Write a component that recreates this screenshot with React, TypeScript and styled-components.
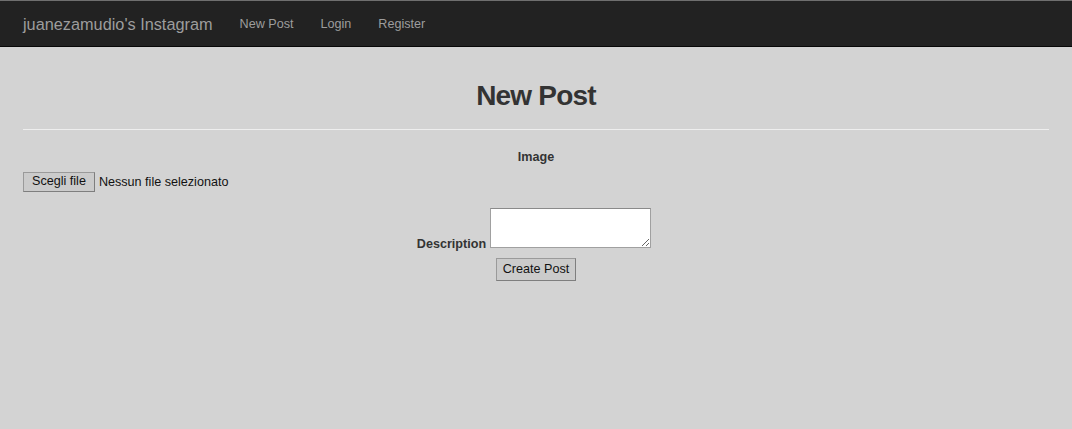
import React from "react";
import styled, { createGlobalStyle } from "styled-components";

const GlobalStyle = createGlobalStyle`
  html, body {
    margin: 0;
    padding: 0;
    background: #d3d3d3;
  }
  body {
    font-family: "Liberation Sans", Arial, Helvetica, sans-serif;
    color: #333;
    font-size: 12.6px;
  }
  * { box-sizing: border-box; }
`;

const Navbar = styled.nav`
  height: 47px;
  background: #222;
  border-top: 1px solid #6f6f6f;
  border-bottom: 1px solid #080808;
  display: flex;
  align-items: center;
  padding: 0 23px;
  gap: 27px;
`;

const Brand = styled.a`
  color: #9d9d9d;
  font-size: 16.3px;
  text-decoration: none;
  line-height: 20px;
`;

const NavLink = styled.a`
  color: #9d9d9d;
  font-size: 12.6px;
  text-decoration: none;
  line-height: 20px;
`;

const Main = styled.main`
  padding: 0 23px;
`;

const Title = styled.h1`
  margin: 33px 0 0;
  font-size: 28px;
  line-height: 32px;
  font-weight: bold;
  text-align: center;
  color: #333;
  letter-spacing: -0.8px;
`;

const Rule = styled.hr`
  margin: 17px 0 0;
  border: 0;
  border-top: 1px solid #eee;
  height: 0;
`;

const Form = styled.form`
  display: flex;
  flex-direction: column;
  align-items: center;
`;

const FieldLabel = styled.label`
  font-weight: bold;
  font-size: 12.6px;
  line-height: 16px;
  color: #333;
`;

const ImageLabel = styled(FieldLabel)`
  margin-top: 19px;
`;

const FileRow = styled.div`
  align-self: stretch;
  display: flex;
  align-items: center;
  gap: 4px;
  margin-top: 6px;
  height: 21px;
`;

const Button = styled.button<{ $pad: number }>`
  font-family: "Liberation Sans", Arial, Helvetica, sans-serif;
  font-size: 12.6px;
  color: #111;
  background: #cbcbcb;
  border: 1px solid #9a9a9a;
  border-right-color: #7e7e7e;
  border-bottom-color: #7e7e7e;
  border-radius: 0;
  padding: 0 ${(p) => p.$pad}px;
  margin: 0;
  line-height: 1;
`;

const FileButton = styled(Button)`
  height: 20px;
`;

const FileStatus = styled.span`
  font-size: 12.6px;
  color: #111;
`;

const DescRow = styled.div`
  display: flex;
  align-items: flex-end;
  gap: 4px;
  margin-top: 16px;
  margin-right: 4px;
`;

const DescLabel = styled(FieldLabel)`
  line-height: 13px;
  margin-bottom: -3px;
`;

const TextArea = styled.textarea`
  width: 161px;
  height: 40px;
  background: #fff;
  border: 1px solid #a0a0a0;
  border-top-color: #8a8a8a;
  margin: 0;
  padding: 2px;
  font-family: "Liberation Mono", monospace;
  font-size: 13px;
`;

const SubmitButton = styled(Button)`
  height: 23px;
  margin-top: 10px;
`;

export default function App() {
  return (
    <>
      <GlobalStyle />
      <Navbar>
        <Brand href="#">juanezamudio's Instagram</Brand>
        <NavLink href="#">New Post</NavLink>
        <NavLink href="#">Login</NavLink>
        <NavLink href="#">Register</NavLink>
      </Navbar>
      <Main>
        <Title>New Post</Title>
        <Rule />
        <Form onSubmit={(e) => e.preventDefault()}>
          <ImageLabel>Image</ImageLabel>
          <FileRow>
            <FileButton type="button" $pad={8}>Scegli file</FileButton>
            <FileStatus>Nessun file selezionato</FileStatus>
          </FileRow>
          <DescRow>
            <DescLabel htmlFor="desc">Description</DescLabel>
            <TextArea id="desc" />
          </DescRow>
          <SubmitButton type="submit" $pad={6}>Create Post</SubmitButton>
        </Form>
      </Main>
    </>
  );
}
